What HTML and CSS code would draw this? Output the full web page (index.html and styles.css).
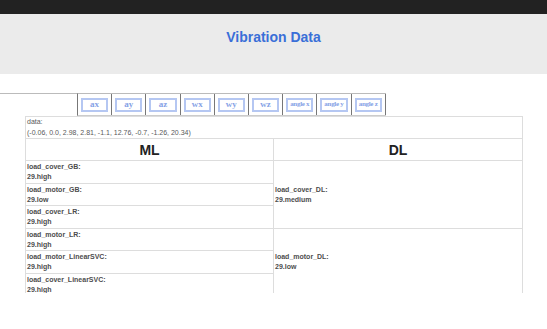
FILE: index.html
```html
<!DOCTYPE html>
<html lang="en">
<head>
    <meta charset="UTF-8">
    <meta name="viewport" content="width=device-width, initial-scale=1.0">
    <title>Vibration Data</title>
    <link rel="stylesheet" href="styles.css">
</head>
<body>
    <div class="topbar"></div>
    <header class="page-header">
        <h1 class="page-title">Vibration Data</h1>
    </header>

    <div class="toolbar">
        <div class="toolbar-line"></div>
        <div class="tabs">
            <button class="tab"><span>ax</span></button>
            <button class="tab"><span>ay</span></button>
            <button class="tab"><span>az</span></button>
            <button class="tab"><span>wx</span></button>
            <button class="tab"><span>wy</span></button>
            <button class="tab"><span>wz</span></button>
            <button class="tab small"><span>angle x</span></button>
            <button class="tab small"><span>angle y</span></button>
            <button class="tab small"><span>angle z</span></button>
        </div>
    </div>

    <div class="results">
        <table class="result-table">
            <tr>
                <td colspan="2" class="data-cell">data:<br>(-0.06, 0.0, 2.98, 2.81, -1.1, 12.76, -0.7, -1.26, 20.34)</td>
            </tr>
            <tr>
                <th>ML</th>
                <th>DL</th>
            </tr>
            <tr>
                <td>load_cover_GB:<br>29.high</td>
                <td rowspan="3" class="dl-cell">load_cover_DL:<br>29.medium</td>
            </tr>
            <tr>
                <td>load_motor_GB:<br>29.low</td>
            </tr>
            <tr>
                <td>load_cover_LR:<br>29.high</td>
            </tr>
            <tr>
                <td>load_motor_LR:<br>29.high</td>
                <td rowspan="3" class="dl-cell">load_motor_DL:<br>29.low</td>
            </tr>
            <tr>
                <td>load_motor_LinearSVC:<br>29.high</td>
            </tr>
            <tr>
                <td>load_cover_LinearSVC:<br>29.high</td>
            </tr>
        </table>
    </div>
</body>
</html>
```

FILE: styles.css
```css
* {
    margin: 0;
    padding: 0;
    box-sizing: border-box;
}

body {
    font-family: 'Liberation Sans', Arial, sans-serif;
    background: #fff;
}

.topbar {
    height: 14px;
    background: #222;
}

.page-header {
    height: 60px;
    background: #ebebeb;
    padding-top: 15px;
    text-align: center;
}

.page-title {
    font-size: 14px;
    line-height: 16px;
    font-weight: 700;
    color: #3a6fd8;
}

.toolbar {
    display: flex;
    margin-top: 19px;
}

.toolbar-line {
    width: 77px;
    border-top: 1px solid #bbb;
}

.tabs {
    display: flex;
    border-top: 1px solid #bbb;
    border-bottom: 1px solid #ccc;
    border-left: 1px solid #777;
}

.tab {
    width: 34.2px;
    height: 21px;
    padding: 3px;
    background: #fff;
    border: none;
    border-right: 1px solid #777;
    cursor: pointer;
}

.tab span {
    display: block;
    height: 14px;
    border: 2px solid #b5c7f2;
    font-family: 'Liberation Serif', 'Times New Roman', serif;
    font-size: 9px;
    font-weight: 700;
    line-height: 9px;
    color: #86a2e6;
    text-align: center;
}

.tab.small span {
    font-size: 7px;
    letter-spacing: -0.3px;
}

.results {
    width: 498px;
    height: 177px;
    margin-left: 25px;
    overflow: hidden;
}

.result-table {
    width: 100%;
    border-collapse: collapse;
    font-size: 7px;
}

.result-table td,
.result-table th {
    border: 1px solid #ddd;
    text-align: left;
    vertical-align: top;
    padding: 1px 1px 0.5px;
    line-height: 10px;
    font-weight: 700;
    color: #4d4d4d;
}

.result-table td:first-child {
    width: 248px;
}

.result-table .data-cell {
    padding: 0 1px;
    line-height: 10.5px;
    font-weight: 400;
    color: #595959;
}

.result-table th {
    height: 22px;
    text-align: center;
    vertical-align: middle;
    font-size: 14px;
    line-height: 16px;
    color: #222;
}

.result-table .dl-cell {
    vertical-align: middle;
}
```
